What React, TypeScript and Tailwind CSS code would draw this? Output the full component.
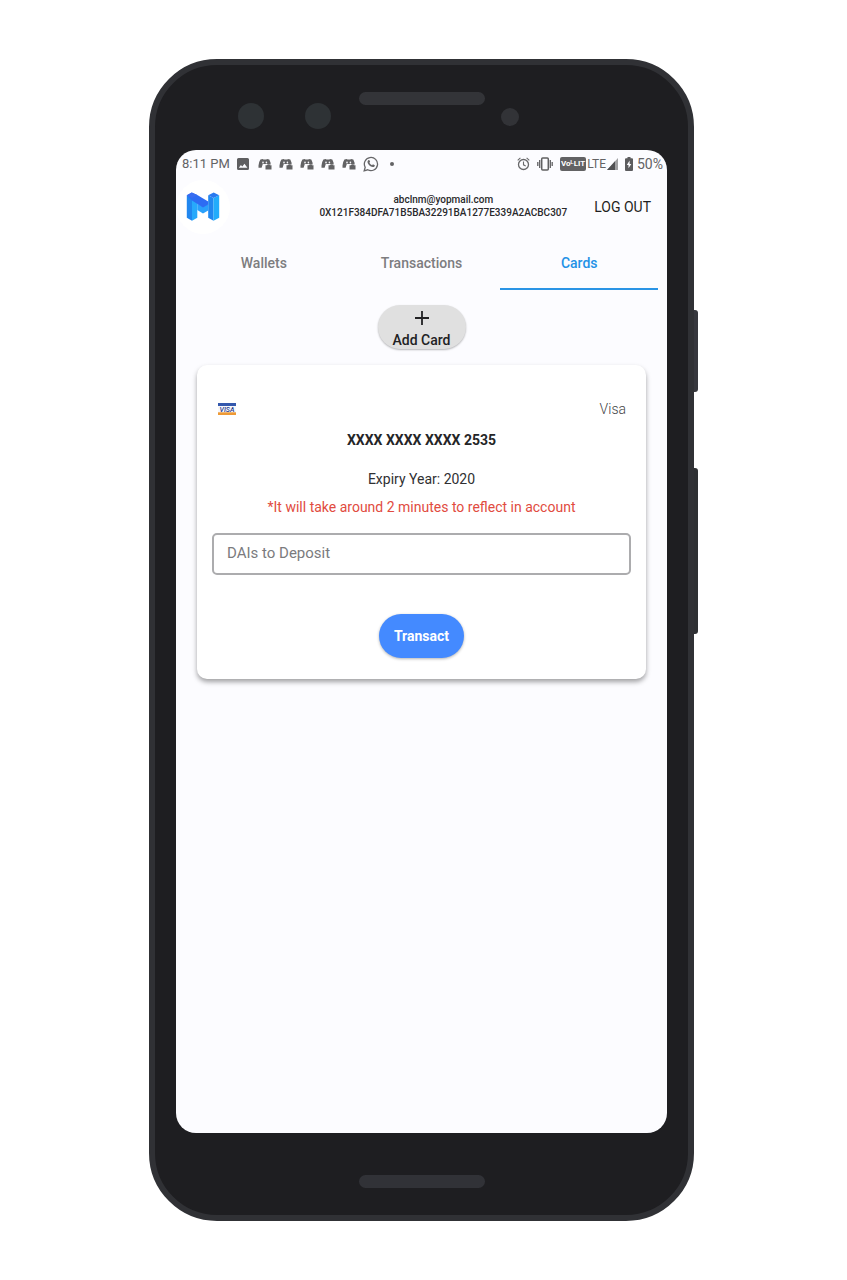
import { useState } from "react";

const tabs = ["Wallets", "Transactions", "Cards"];

function ImageIcon() {
  return (
    <svg width="12" height="12" viewBox="0 0 12 12" aria-hidden="true">
      <path fill="#5f5f61" fillRule="evenodd" d="M1.5 0h9A1.5 1.5 0 0 1 12 1.5v9A1.5 1.5 0 0 1 10.5 12h-9A1.5 1.5 0 0 1 0 10.5v-9A1.5 1.5 0 0 1 1.5 0ZM1.8 9.8h8.6L7.5 5.8 5.3 8.5 3.9 6.9Z" />
    </svg>
  );
}

function GamepadIcon() {
  return (
    <svg width="14" height="12" viewBox="0 0 14 12" aria-hidden="true">
      <path fill="#626264" d="M2.4 1.6 4.8 1l.6.4h3l.6-.4 2.3.6 1.200 3 .2 1.800H9.800V6H4.800L3.600 9.800H.5V7.500l.7-3.600Z" />
      <ellipse cx="5" cy="4.500" rx=".8" ry="1" fill="#f4f4f8" />
      <ellipse cx="8.400" cy="4.500" rx=".8" ry="1" fill="#f4f4f8" />
      <path fill="#626264" d="M7.500 7.300h1.300l.7-.7h1.900l.7.700h1.400v4.200h-6Z" />
    </svg>
  );
}

function WhatsappIcon() {
  return (
    <svg width="16" height="16" viewBox="0 0 16 16" fill="none" stroke="#666668" aria-hidden="true">
      <path strokeWidth="1.3" d="m1.2 14.800 1-3.500a6.600 6.600 0 1 1 2.500 2.500Z" />
      <path fill="#666668" stroke="none" d="M5.300 4.200c.6-.5 1-.4 1.300.3l.5 1.200-.7 1c.6 1.200 1.500 2 2.700 2.500l.8-.9 1.900.9c.2 1-.8 1.900-2 1.800-2.700-.3-5.300-3-5.300-5.300 0-.6.300-1.100.8-1.500Z" />
    </svg>
  );
}

function AlarmIcon() {
  return (
    <svg width="13" height="14" viewBox="0 0 13 14" fill="none" stroke="#68686a" aria-hidden="true">
      <circle cx="6.5" cy="7.5" r="5" strokeWidth="1.3" />
      <path strokeWidth="1.1" d="M6.500 4.500v3.300l2.200 1.200M.7 3.300 3.400.9M12.300 3.300 9.600.9" />
    </svg>
  );
}

function VibrateIcon() {
  return (
    <svg width="16" height="14" viewBox="0 0 16 14" fill="none" stroke="#606062" aria-hidden="true">
      <rect x="4.700" y="1" width="6.600" height="12" rx="1" strokeWidth="1.500" />
      <path strokeWidth="1.300" d="M2.700 3v8M.8 5v4M13.300 3v8M15.200 5v4" />
    </svg>
  );
}

function SignalIcon() {
  return (
    <svg width="11" height="12" viewBox="0 0 11 12" aria-hidden="true">
      <path fill="#a0a0a2" d="M11 0v12H0Z" />
      <path fill="#505052" d="M8 3.300V12H0Z" />
    </svg>
  );
}

function BatteryIcon() {
  return (
    <svg width="8" height="14" viewBox="0 0 8 14" aria-hidden="true">
      <path fill="#5c5c5e" d="M2.500 0h3v1.200H7a1 1 0 0 1 1 1V13a1 1 0 0 1-1 1H1a1 1 0 0 1-1-1V2.200a1 1 0 0 1 1-1h1.500Z" />
      <path fill="#fcfcff" d="M4.600 3.500 1.800 8h1.700v3.300L6.300 7H4.600Z" />
    </svg>
  );
}

function Logo() {
  return (
    <svg width="34" height="30" viewBox="0 0 34 30" aria-hidden="true">
      <path fill="#2187ef" d="M.8 3.300 6 6.500v22.300L.8 25.700Z" />
      <path fill="#27a9fb" d="m6 6.500 5.300 3v16.300L6 28.800Z" />
      <path fill="#2187ef" d="M22.200 3.300 27.500 6v22.800l-5.300-3Z" />
      <path fill="#22acfb" d="m27.500 6 5.700-2.700v22.400l-5.700 3.100Z" />
      <path fill="#2aa0fb" d="m11.300 11.500 5.700 3 5.200-2.500v6.500L17 21.500l-5.700-3.500Z" />
      <path fill="#2d6cf3" d="M.8 3.300 5.800.6l5.500 2.400 10.900 6.600v3L17 15.500 6 8.500Z" />
      <path fill="#3a6df0" d="M.8 3.300 5.800.6l5.500 2.400L6 6Z" />
      <path fill="#2979ef" d="M22.200 3.300 27.700.6l5.500 2.700L27.500 6Z" />
    </svg>
  );
}

function VisaIcon() {
  return (
    <svg width="20" height="14" viewBox="0 0 20 14" role="img" aria-label="Visa">
      <rect x="1" y="1" width="18" height="12" fill="#f6f7fc" />
      <rect x="1" y="1" width="18" height="3" fill="#3458ad" />
      <rect x="1" y="10.300" width="18" height="2.700" fill="#ee9a35" />
      <text x="10" y="9.700" textAnchor="middle" fill="#293c8b" fontFamily="Roboto, sans-serif" fontSize="7" fontWeight="500" fontStyle="italic">VISA</text>
    </svg>
  );
}

function StatusBar() {
  return (
    <div className="flex h-7 items-center justify-between pr-1 pl-1.5 text-[14px] text-[#636365]">
      <div className="flex items-center gap-[7px]">
        <span className="text-[13px]">8:11 PM</span>
        <ImageIcon />
        <div className="flex gap-[7px] pl-0.5">
          <GamepadIcon />
          <GamepadIcon />
          <GamepadIcon />
          <GamepadIcon />
          <GamepadIcon />
        </div>
        <WhatsappIcon />
        <span className="ml-1 size-1 rounded-full bg-[#636365]" />
      </div>
      <div className="flex items-center gap-[7px]">
        <AlarmIcon />
        <VibrateIcon />
        <div className="flex items-center gap-px">
          <span className="rounded-[2px] bg-[#626264] px-px text-[8px] leading-[14px] font-bold text-white">Vo&#x1D38;LIT</span>
          <span className="text-[12px]">LTE</span>
          <SignalIcon />
        </div>
        <div className="flex items-center gap-1">
          <BatteryIcon />
          <span>50%</span>
        </div>
      </div>
    </div>
  );
}

function Header() {
  return (
    <header className="flex h-[58px] items-center pr-4">
      <div className="flex size-[54px] shrink-0 items-center justify-center rounded-full bg-white">
        <Logo />
      </div>
      <div className="min-w-0 flex-1 pr-[27px] text-right text-[10px] leading-[13px] font-medium text-[#29292b]">
        <div className="inline-block pb-0.5 text-center">
          <p>abclnm@yopmail.com</p>
          <p>0X121F384DFA71B5BA32291BA1277E339A2ACBC307</p>
        </div>
      </div>
      <button className="shrink-0 text-[14px] text-[#1f1f21]">LOG OUT</button>
    </header>
  );
}

export default function App() {
  const [active, setActive] = useState("Cards");
  const [amount, setAmount] = useState("");

  return (
    <main className="flex min-h-screen justify-center bg-white py-[59px] font-[Roboto,sans-serif]">
      <div className="flex w-full max-w-[549px]">
        <div className="flex min-w-0 flex-1 flex-col rounded-[68px] border-[6px] border-[#303135] bg-[#1e1e21] px-[21px]">
          <div className="grid h-[85px] grid-cols-[1fr_126px_1fr] pt-[27px]">
            <div className="flex justify-end gap-[41px] pt-[11px] pr-7">
              <span className="size-[26px] rounded-full bg-[#2e3235]" />
              <span className="size-[26px] rounded-full bg-[#2e3235]" />
            </div>
            <div className="h-[13px] rounded-full bg-[#333438]" />
            <div className="pt-4 pl-4">
              <span className="block size-[18px] rounded-full bg-[#323337]" />
            </div>
          </div>

          <div className="flex flex-1 flex-col rounded-[20px] bg-[#fcfcff]">
            <StatusBar />
            <Header />

            <nav className="flex px-[9px]" role="tablist">
              {tabs.map((tab) => (
                <button
                  key={tab}
                  role="tab"
                  aria-selected={active === tab}
                  onClick={() => setActive(tab)}
                  className={`flex-1 border-b-2 pt-4 pb-[14px] text-[14px] leading-[22px] font-medium ${
                    active === tab ? "border-[#2a94e5] text-[#2492e6]" : "border-transparent text-[#7d7d80]"
                  }`}
                >
                  {tab}
                </button>
              ))}
            </nav>

            <div className="flex flex-col items-center gap-4 px-[21px] pt-[15px]">
              <button className="flex h-11 w-[88px] flex-col items-center rounded-full bg-[#e0e0e0] pt-[5px] text-[14px] leading-[18px] font-medium text-[#222224] shadow-[0_1px_2px_rgba(0,0,0,0.28)]">
                <svg width="16" height="16" viewBox="0 0 16 16" fill="none" stroke="#222224" strokeWidth="1.800" className="mb-[5px] shrink-0" aria-hidden="true">
                  <path d="M8 1v14M1 8h14" />
                </svg>
                Add Card
              </button>

              <section className="flex w-full flex-col rounded-[10px] bg-white px-[15px] pt-[33px] pb-[21px] text-center shadow-[0_3px_5px_rgba(0,0,0,0.36)]">
                <div className="flex h-[22px] items-center justify-between px-[5px] text-[14px] font-light text-[#444446]">
                  <VisaIcon />
                  <span>Visa</span>
                </div>
                <p className="mt-[9px] text-[14px] leading-[22px] font-bold text-[#252527]">XXXX XXXX XXXX 2535</p>
                <p className="mt-[17px] text-[14px] leading-[22px] text-[#303032]">Expiry Year: 2020</p>
                <p className="mt-[6px] text-[14px] leading-[22px] text-[#e14b40]">*It will take around 2 minutes to reflect in account</p>
                <input
                  aria-label="DAIs to Deposit"
                  placeholder="DAIs to Deposit"
                  value={amount}
                  onChange={(event) => setAmount(event.target.value)}
                  className="mt-[15px] h-[42px] w-full rounded-[5px] border-2 border-[#acacae] bg-white px-[13px] pb-0.5 text-[15px] text-[#333335] outline-none placeholder:text-[#7b7b7e]"
                />
                <button className="mt-[39px] h-11 self-center rounded-full bg-[#448aff] px-[15px] text-[14px] font-bold text-white shadow-[0_1px_3px_rgba(0,0,0,0.3)]">
                  Transact
                </button>
              </section>
            </div>
          </div>

          <div className="flex h-[82px] justify-center pt-[42px]">
            <div className="h-[13px] w-[126px] rounded-full bg-[#313237]" />
          </div>
        </div>

        <div className="flex w-1 shrink-0 flex-col gap-[76px] pt-[251px]">
          <span className="h-[82px] rounded-r-[3px] bg-[#36373d]" />
          <span className="h-[166px] rounded-r-[3px] bg-[#2e3033]" />
        </div>
      </div>
    </main>
  );
}
